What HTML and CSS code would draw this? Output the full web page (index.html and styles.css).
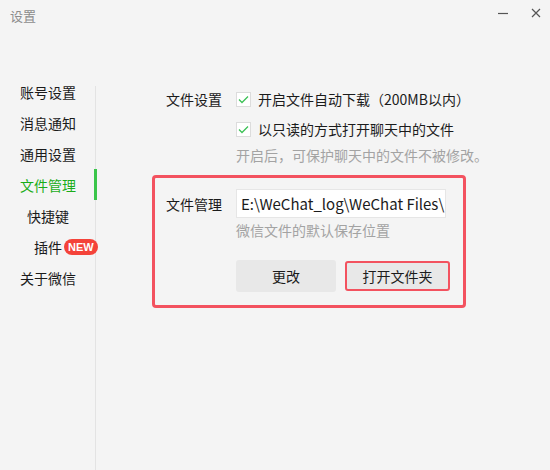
FILE: index.html
```html
<!DOCTYPE html>
<html lang="zh-CN">

<head>
    <meta charset="UTF-8">
    <meta name="viewport" content="width=device-width, initial-scale=1.0">
    <title>设置</title>
    <link rel="stylesheet" href="styles.css">
</head>

<body>
    <div class="window">
        <div class="titlebar">
            <span class="title">设置</span>
            <div class="controls">
                <svg class="ctrl" width="12" height="12" viewBox="0 0 12 12">
                    <line x1="1" y1="6.5" x2="11" y2="6.5" stroke="#555" stroke-width="1.2" />
                </svg>
                <svg class="ctrl" width="12" height="12" viewBox="0 0 12 12">
                    <path d="M2 2 L10 10 M10 2 L2 10" stroke="#555" stroke-width="1.2" fill="none" />
                </svg>
            </div>
        </div>

        <div class="main">
            <ul class="sidebar">
                <li class="nav-item">账号设置</li>
                <li class="nav-item">消息通知</li>
                <li class="nav-item">通用设置</li>
                <li class="nav-item active">文件管理</li>
                <li class="nav-item sub">快捷键</li>
                <li class="nav-item sub2">插件<span class="badge">NEW</span></li>
                <li class="nav-item">关于微信</li>
            </ul>

            <div class="content">
                <div class="row">
                    <span class="label">文件设置</span>
                    <label class="check">
                        <span class="box">
                            <svg width="11" height="9" viewBox="0 0 11 9">
                                <polyline points="1,4.5 4,7.5 10,1.5" fill="none" stroke="#3cc156" stroke-width="1.3" />
                            </svg>
                        </span>
                        开启文件自动下载（200MB以内）
                    </label>
                </div>
                <div class="row indent">
                    <label class="check">
                        <span class="box">
                            <svg width="11" height="9" viewBox="0 0 11 9">
                                <polyline points="1,4.5 4,7.5 10,1.5" fill="none" stroke="#3cc156" stroke-width="1.3" />
                            </svg>
                        </span>
                        以只读的方式打开聊天中的文件
                    </label>
                </div>
                <div class="hint indent">开启后，可保护聊天中的文件不被修改。</div>

                <div class="file-box">
                    <div class="row path-row">
                        <span class="label">文件管理</span>
                        <div class="path">E:\WeChat_log\WeChat Files\</div>
                    </div>
                    <div class="hint indent-box">微信文件的默认保存位置</div>
                    <div class="buttons indent-box">
                        <button type="button" class="btn">更改</button>
                        <button type="button" class="btn marked">打开文件夹</button>
                    </div>
                </div>
            </div>
        </div>
    </div>
</body>

</html>
```

FILE: styles.css
```css
* {
    box-sizing: border-box;
}

body {
    margin: 0;
    font-family: "Noto Sans CJK SC", "Noto Sans", sans-serif;
    font-size: 14px;
    color: #1b1b1b;
    background-color: #f4f4f4;
}

.window {
    width: 550px;
    height: 470px;
    background-color: #f4f4f4;
}

.titlebar {
    display: flex;
    justify-content: space-between;
    align-items: flex-start;
    padding: 7px 10px 0 10px;
    height: 86px;
}

.title {
    font-size: 13px;
    line-height: 18px;
    color: #8c8c8c;
}

.controls {
    display: flex;
    gap: 21px;
    margin-right: -2px;
}

.main {
    display: flex;
    height: 384px;
}

.sidebar {
    list-style: none;
    margin: 0;
    padding: 0;
    width: 96px;
    border-right: 1px solid #e3e3e3;
}

.nav-item {
    display: flex;
    align-items: center;
    height: 31px;
    padding-left: 20px;
    margin-right: -2px;
    border-right: 3px solid transparent;
    white-space: nowrap;
}

.nav-item:first-child {
    margin-top: -10px;
}

.nav-item.active {
    color: #1aad19;
    border-right-color: #3ac54a;
}

.nav-item.sub {
    padding-left: 27px;
}

.nav-item.sub2 {
    padding-left: 34px;
}

.badge {
    margin-left: 2px;
    background-color: #f4433a;
    color: white;
    font-family: "Liberation Sans", Arial, sans-serif;
    font-weight: bold;
    font-size: 11px;
    line-height: 16px;
    padding: 0 4px;
    border-radius: 8px;
}

.content {
    padding-left: 56px;
}

.row {
    display: flex;
    align-items: center;
    height: 26px;
    padding-left: 14px;
}

.row + .row {
    margin-top: 4px;
}

.label {
    width: 70px;
}

.indent {
    padding-left: 84px;
}

.check {
    display: flex;
    align-items: center;
    gap: 7px;
}

.box {
    display: flex;
    align-items: center;
    justify-content: center;
    width: 15px;
    height: 15px;
    background-color: white;
    border: 1px solid #dcdcdc;
}

.hint {
    color: #a3a3a3;
    line-height: 20px;
    margin-top: 3px;
}

.file-box {
    margin-top: 10px;
    width: 314px;
    border: 3px solid #f3525f;
    border-radius: 4px;
    padding: 11px 0 13px 0;
}

.path-row {
    height: 29px;
    padding-left: 11px;
}

.path {
    width: 210px;
    height: 29px;
    background-color: white;
    border: 1px solid #e6e6e6;
    padding-left: 4px;
    font-size: 15px;
    line-height: 27px;
    white-space: nowrap;
    overflow: hidden;
}

.indent-box {
    padding-left: 81px;
}

.hint.indent-box {
    margin-top: 2px;
}

.buttons {
    display: flex;
    align-items: center;
    gap: 9px;
    margin-top: 20px;
}

.btn {
    width: 100px;
    height: 32px;
    border: none;
    border-radius: 3px;
    background-color: #e8e8e8;
    font-family: inherit;
    font-size: 14px;
    color: #1b1b1b;
}

.btn.marked {
    width: 105px;
    height: 30px;
    border: 2.5px solid #f3525f;
}
```
